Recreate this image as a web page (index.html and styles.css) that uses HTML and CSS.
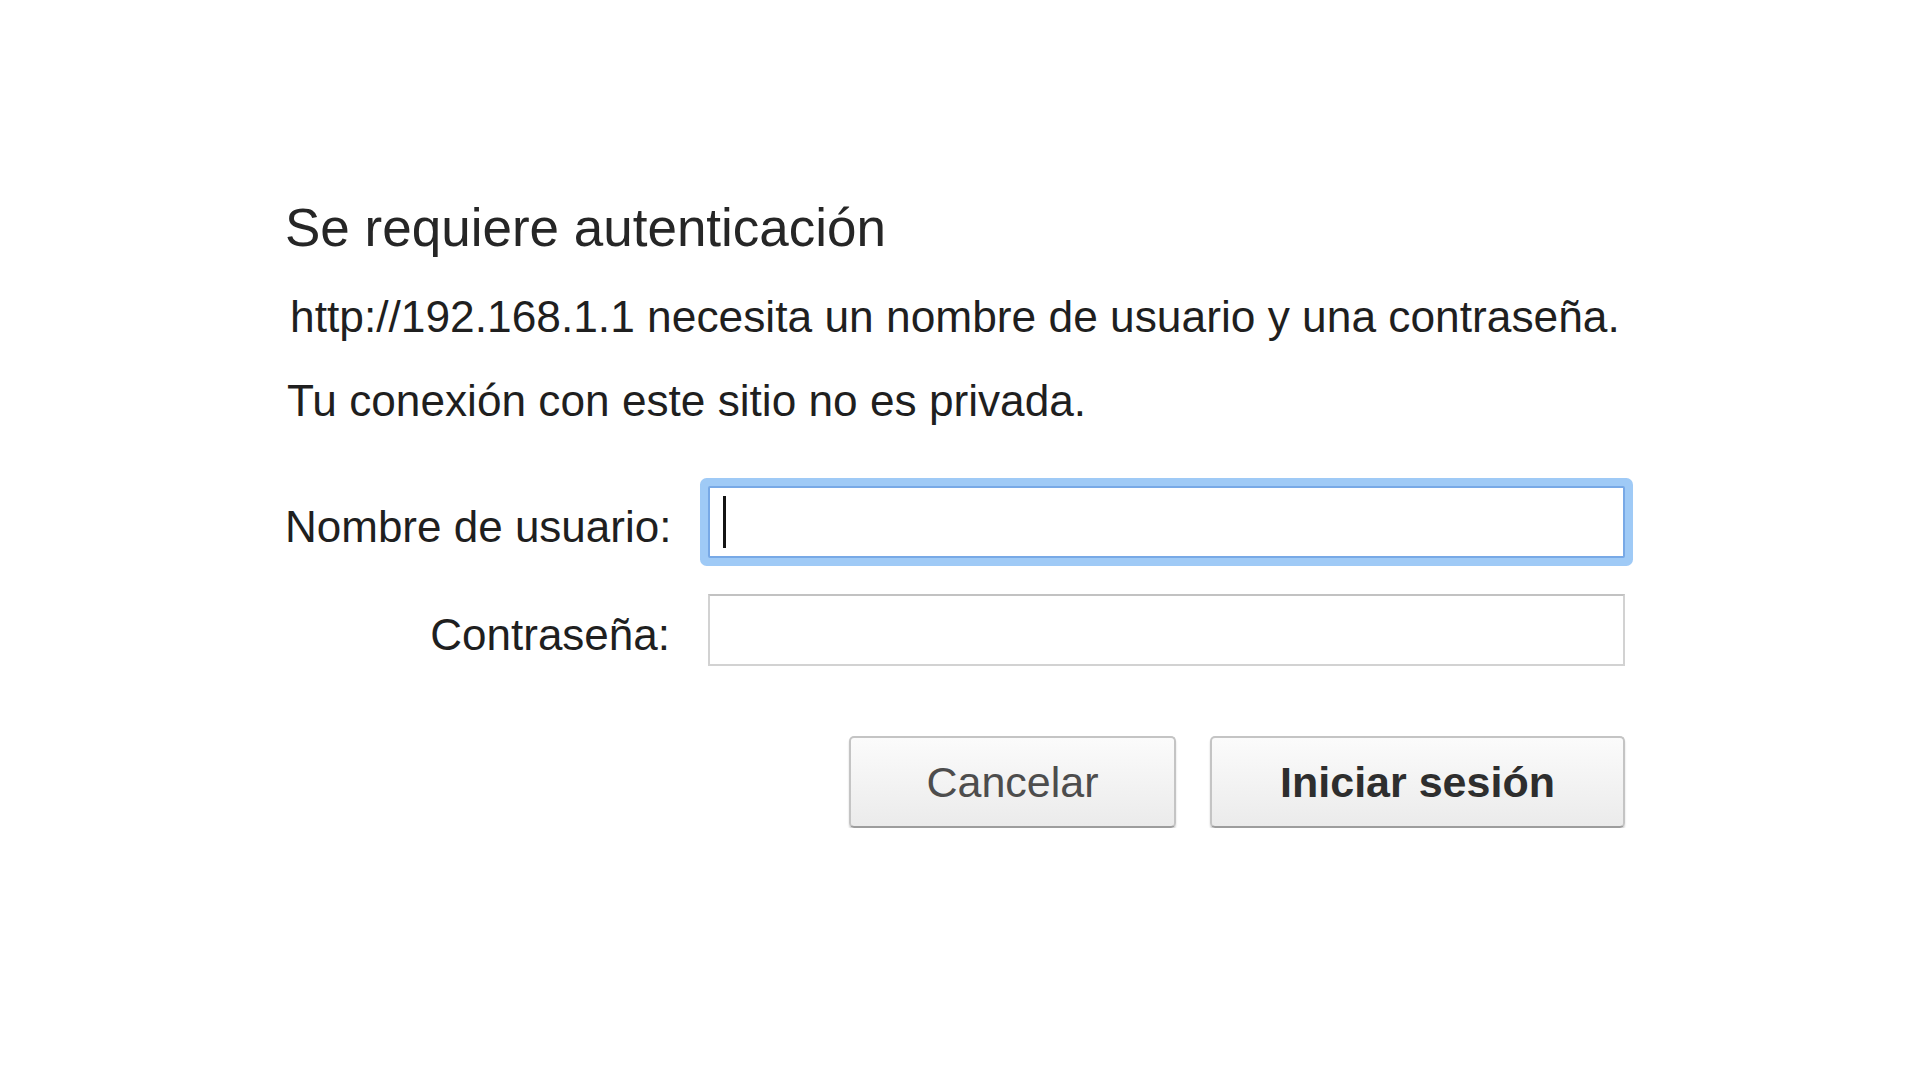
FILE: index.html
```html
<!DOCTYPE html>
<html lang="es">
<head>
    <meta charset="UTF-8">
    <meta name="viewport" content="width=device-width, initial-scale=1.0">
    <title>Se requiere autenticación</title>
    <link rel="stylesheet" href="styles.css">
</head>
<body>

    <div class="dialog">
        <h1 class="title">Se requiere autenticación</h1>
        <p class="text host">http://192.168.1.1 necesita un nombre de usuario y una contraseña.</p>
        <p class="text note">Tu conexión con este sitio no es privada.</p>

        <form class="login" id="loginForm">
            <label class="label" for="username">Nombre de usuario:</label>
            <div class="field focused" id="username"><span class="caret"></span></div>

            <label class="label" for="password">Contraseña:</label>
            <div class="field" id="password"></div>

            <div class="buttons">
                <button type="button" class="btn">Cancelar</button>
                <button type="submit" class="btn primary">Iniciar sesión</button>
            </div>
        </form>
    </div>

</body>
</html>
```

FILE: styles.css
```css
body {
    margin: 0;
    background: #ffffff;
    font-family: "Liberation Sans", Arial, sans-serif;
    color: #1f1f1f;
}
.dialog {
    width: 1340px;
    margin-left: 285px;
    padding-top: 197px;
}
.title {
    margin: 0;
    font-size: 53px;
    line-height: 61px;
    font-weight: normal;
    color: #262626;
}
.text {
    margin: 34px 0 0;
    font-size: 44px;
    line-height: 50px;
}
.host {
    padding-left: 5px;
    font-size: 44.3px;
}
.note {
    padding-left: 2px;
    font-size: 44.2px;
}
.login {
    margin-top: 60px;
    display: grid;
    grid-template-columns: 385px 917px;
    column-gap: 38px;
    row-gap: 36px;
    align-items: center;
}
.label {
    font-size: 44px;
    line-height: 50px;
    text-align: right;
    padding-top: 10px;
    white-space: nowrap;
}
.field {
    box-sizing: border-box;
    height: 72px;
    border: 2px solid #d2d2d2;
    border-top-color: #c2c2c2;
    background: #fff;
    display: flex;
    align-items: center;
    padding-left: 13px;
}
.field.focused {
    border: 2px solid #78a9e6;
    border-radius: 2px;
    box-shadow: 0 0 0 8px #9fcaf6;
}
.caret {
    width: 3px;
    height: 52px;
    background: #141414;
}
.buttons {
    grid-column: 1 / 3;
    margin-top: 34px;
    display: flex;
    justify-content: flex-end;
    gap: 34px;
}
.btn {
    height: 92px;
    width: 327px;
    font-family: "Liberation Sans", Arial, sans-serif;
    font-size: 43px;
    color: #4d4d4d;
    background: linear-gradient(#fbfbfb, #ebebeb);
    border: 2px solid #c4c4c4;
    border-bottom-color: #9d9d9d;
    border-radius: 5px;
    box-shadow: 0 2px 2px rgba(0, 0, 0, 0.18);
    cursor: pointer;
}
.btn.primary {
    width: 415px;
    font-weight: bold;
    color: #2e2e2e;
}
```
